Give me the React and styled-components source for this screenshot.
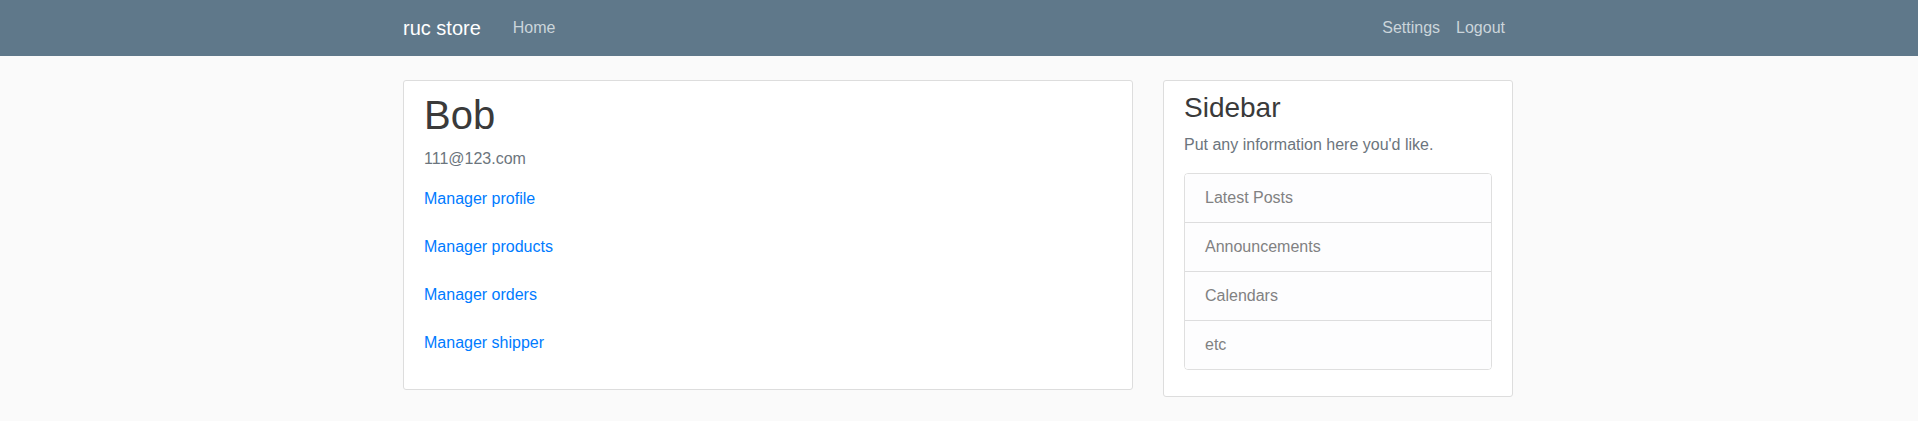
import React from 'react';
import styled, { createGlobalStyle } from 'styled-components';

const GlobalStyle = createGlobalStyle`
  * {
    box-sizing: border-box;
  }

  body {
    margin: 0;
    background: #fafafa;
    color: #333333;
    font-family: "Liberation Sans", Arial, Helvetica, sans-serif;
    font-size: 16px;
    line-height: 1.5;
  }
`;

const Page = styled.div`
  padding-right: 2px;
`;

const Header = styled.nav`
  background: #5f788a;
  padding: 8px 16px;
  margin-right: -2px;
  padding-right: 18px;
`;

const Container = styled.div`
  width: 100%;
  max-width: 1140px;
  margin: 0 auto;
  padding: 0 15px;
  display: ${props => (props.nav ? 'flex' : 'block')};
  align-items: center;
`;

const Brand = styled.a`
  color: #ffffff;
  font-size: 20px;
  line-height: 30px;
  padding: 5px 0;
  margin-right: 24px;
  text-decoration: none;
  white-space: nowrap;
`;

const NavGroup = styled.div`
  display: flex;
  margin-left: ${props => (props.right ? 'auto' : '0')};
`;

const NavLink = styled.a`
  color: #cbd5db;
  padding: 8px;
  line-height: 24px;
  text-decoration: none;
  cursor: pointer;

  &:hover {
    color: #ffffff;
  }
`;

const Main = styled.main`
  margin-top: 24px;
`;

const Row = styled.div`
  display: flex;
  margin: 0 -15px;
`;

const Col = styled.div`
  flex: 0 0 ${props => (props.span / 12) * 100}%;
  max-width: ${props => (props.span / 12) * 100}%;
  padding: 0 15px;
`;

const Section = styled.div`
  background: #ffffff;
  padding: 10px 20px;
  border: 1px solid #dddddd;
  border-radius: 3px;
  margin-bottom: 20px;
`;

const AccountHeading = styled.h2`
  font-size: 40px;
  font-weight: 500;
  line-height: 1.2;
  margin: 0 0 8px;
  color: #3a3a3a;
`;

const Muted = styled.p`
  color: #6c757d;
  margin: 0 0 16px;
`;

const ManageLink = styled.a`
  display: block;
  color: #007bff;
  text-decoration: none;
  margin-bottom: 24px;
  cursor: pointer;

  &:hover {
    text-decoration: underline;
  }
`;

const SidebarTitle = styled.h3`
  font-size: 28px;
  font-weight: 500;
  line-height: 1.2;
  margin: 0 0 8px;
  color: #3a3a3a;
`;

const List = styled.ul`
  list-style: none;
  padding: 0;
  margin: 0 0 16px;
  border: 1px solid rgba(0, 0, 0, 0.125);
  border-radius: 4px;
  overflow: hidden;
`;

const ListItem = styled.li`
  padding: 12px 20px;
  color: #818182;
  background: #fdfdfe;
  border-top: ${props => (props.first ? 'none' : '1px solid rgba(0, 0, 0, 0.125)')};
`;

const manageLinks = ['Manager profile', 'Manager products', 'Manager orders', 'Manager shipper'];
const sideItems = ['Latest Posts', 'Announcements', 'Calendars', 'etc'];

const App = () => {
  return (
    <Page>
      <GlobalStyle />
      <Header>
        <Container nav>
          <Brand>ruc store</Brand>
          <NavGroup>
            <NavLink>Home</NavLink>
          </NavGroup>
          <NavGroup right>
            <NavLink>Settings</NavLink>
            <NavLink>Logout</NavLink>
          </NavGroup>
        </Container>
      </Header>

      <Main>
        <Container>
          <Row>
            <Col span={8}>
              <Section>
                <AccountHeading>Bob</AccountHeading>
                <Muted>111@123.com</Muted>
                {manageLinks.map(label => (
                  <ManageLink key={label}>{label}</ManageLink>
                ))}
              </Section>
            </Col>
            <Col span={4}>
              <Section>
                <SidebarTitle>Sidebar</SidebarTitle>
                <Muted>Put any information here you'd like.</Muted>
                <List>
                  {sideItems.map((item, i) => (
                    <ListItem key={item} first={i === 0}>
                      {item}
                    </ListItem>
                  ))}
                </List>
              </Section>
            </Col>
          </Row>
        </Container>
      </Main>
    </Page>
  );
};

export default App;
